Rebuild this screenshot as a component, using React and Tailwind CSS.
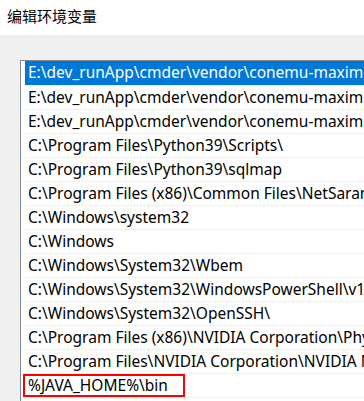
const paths = [
  "E:\\dev_runApp\\cmder\\vendor\\conemu-maximus5",
  "E:\\dev_runApp\\cmder\\vendor\\conemu-maximus5\\ConEmu",
  "E:\\dev_runApp\\cmder\\vendor\\conemu-maximus5\\ConEmu\\Scripts",
  "C:\\Program Files\\Python39\\Scripts\\",
  "C:\\Program Files\\Python39\\sqlmap",
  "C:\\Program Files (x86)\\Common Files\\NetSarang",
  "C:\\Windows\\system32",
  "C:\\Windows",
  "C:\\Windows\\System32\\Wbem",
  "C:\\Windows\\System32\\WindowsPowerShell\\v1.0\\",
  "C:\\Windows\\System32\\OpenSSH\\",
  "C:\\Program Files (x86)\\NVIDIA Corporation\\PhysX\\Common",
  "C:\\Program Files\\NVIDIA Corporation\\NVIDIA NvDLISR",
  "%JAVA_HOME%\\bin",
];

const App = () => {
  return (
    <div
      className="w-[364px] h-[401px] overflow-hidden bg-[#f0f0f0]"
      style={{ fontFamily: '"Noto Sans", "Noto Sans CJK SC", sans-serif' }}
    >
      <div className="h-[35px] bg-white pl-[7px] pt-[6px] text-[15px] text-black leading-[20px]">
        编辑环境变量
      </div>

      <div className="ml-[20px] mt-[25px] w-[420px] bg-white border-t border-l border-[#828790] pl-[4px]">
        {paths.map((p, i) => (
          <div
            key={i}
            className={
              i === 0
                ? "relative h-[24px] bg-[#0078d7] text-white pl-[3px] text-[15.5px] leading-[23px] whitespace-nowrap"
                : "relative h-[24px] border-t border-[#f0f0f0] text-black pl-[3px] text-[15.5px] leading-[22px] whitespace-nowrap"
            }
          >
            {p}
            {i === paths.length - 1 && (
              <span className="absolute left-[-2px] top-0 w-[162px] h-[23px] border-2 border-[#ff0000]" />
            )}
          </div>
        ))}
        <div className="h-[4px] border-t border-[#f0f0f0]" />
      </div>
    </div>
  );
};

export default App;
